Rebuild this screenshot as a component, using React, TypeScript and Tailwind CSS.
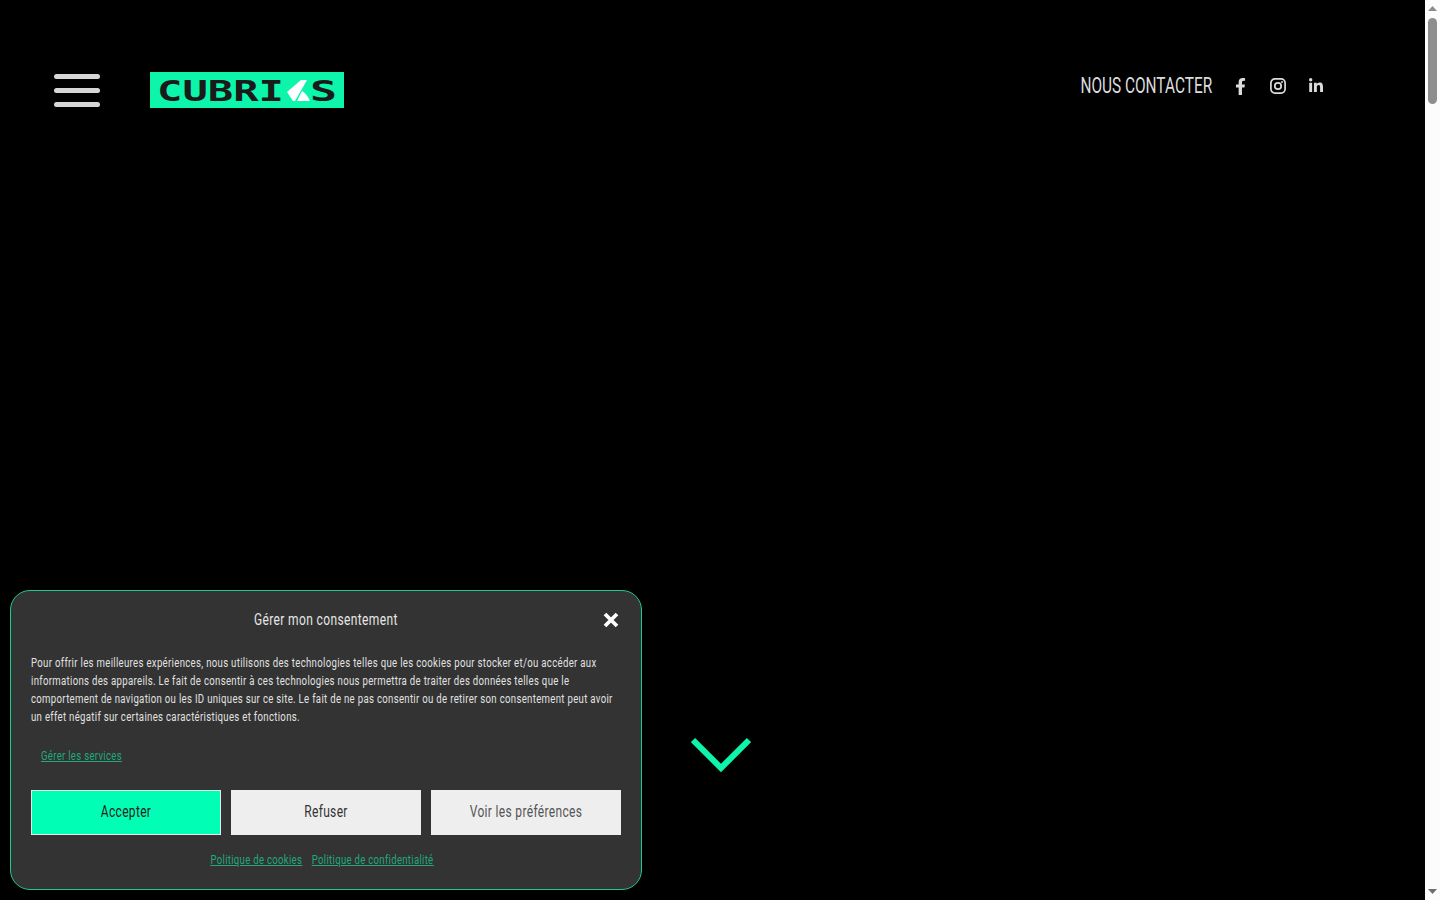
import { FaFacebookF, FaLinkedinIn } from 'react-icons/fa'

function Logo() {
  const letters = { fontFamily: "'DejaVu Sans Mono', monospace", fontWeight: 700, fontSize: 29 }
  return (
    <svg width="194" height="36" viewBox="0 0 194 36" aria-label="Cubriks">
      <rect width="194" height="36" fill="#0cf5ab" />
      <text x="7" y="29" textLength="127" lengthAdjust="spacingAndGlyphs" fill="#1a1a1a" style={letters}>
        CUBRI
      </text>
      <path d="M137 20 L151 8 L157 8 L145 29 L143 29 Z" fill="#fff" />
      <path d="M147 29 L152 19 Q157 22 160 29 Z" fill="#fff" />
      <text x="160" y="29" textLength="27" lengthAdjust="spacingAndGlyphs" fill="#1a1a1a" style={letters}>
        S
      </text>
    </svg>
  )
}

function InstagramIcon() {
  return (
    <svg width="16" height="16" viewBox="0 0 16 16" fill="none" stroke="currentColor" strokeWidth="1.7">
      <rect x="0.9" y="0.9" width="14.2" height="14.2" rx="4" />
      <circle cx="8" cy="8" r="3.2" />
      <circle cx="12" cy="4" r="1" fill="currentColor" stroke="none" />
    </svg>
  )
}

function Header() {
  return (
    <header className="flex items-start pt-[72px] pl-[54px] pr-[90px]">
      <button className="flex flex-col gap-[9px] pt-[2px] mr-[50px]" aria-label="Menu">
        <span className="block w-[46px] h-[5px] rounded-full bg-[#d6d6d6]" />
        <span className="block w-[46px] h-[5px] rounded-full bg-[#d6d6d6]" />
        <span className="block w-[46px] h-[5px] rounded-full bg-[#d6d6d6]" />
      </button>
      <Logo />
      <nav className="ml-auto flex items-center h-[28px] text-[#dcdcdc] font-['Roboto',sans-serif]">
        <a className="block text-[22px] leading-none whitespace-nowrap origin-right scale-x-[0.7] mr-[9px]">NOUS CONTACTER</a>
        <span className="flex justify-center w-[38px]">
          <FaFacebookF className="text-[17px]" />
        </span>
        <span className="flex justify-center w-[38px]">
          <InstagramIcon />
        </span>
        <span className="flex justify-center w-[38px]">
          <FaLinkedinIn className="text-[16px]" />
        </span>
      </nav>
    </header>
  )
}

function ConsentDialog() {
  return (
    <div className="fixed left-[10px] bottom-[10px] w-[632px] h-[300px] rounded-[20px] border border-[#1fc98f] bg-[#333333] px-[20px] text-white font-['Roboto',sans-serif]">
      <div className="relative flex justify-center pt-[18px]">
        <h2 className="text-[16px] leading-[22px] text-[#e6e6e6] whitespace-nowrap tracking-[0.5px] scale-x-[0.75]">Gérer mon consentement</h2>
        <svg className="absolute right-[2px] top-[21px]" width="16" height="16" viewBox="0 0 16 16">
          <path d="M2 2 L14 14 M14 2 L2 14" stroke="#fff" strokeWidth="3.8" />
        </svg>
      </div>
      <p className="mt-[23px] text-[12px] leading-[18px] text-[#e2e2e2] whitespace-nowrap tracking-[0.39px] origin-left scale-x-[0.8]">
        Pour offrir les meilleures expériences, nous utilisons des technologies telles que les cookies pour stocker et/ou accéder aux
        <br />
        informations des appareils. Le fait de consentir à ces technologies nous permettra de traiter des données telles que le
        <br />
        comportement de navigation ou les ID uniques sur ce site. Le fait de ne pas consentir ou de retirer son consentement peut avoir
        <br />
        un effet négatif sur certaines caractéristiques et fonctions.
      </p>
      <a className="block mt-[21px] ml-[10px] text-[12px] leading-[18px] text-[#1fa97c] underline whitespace-nowrap tracking-[0.36px] origin-left scale-x-[0.8]">Gérer les services</a>
      <div className="mt-[25px] grid grid-cols-3 gap-[10px]">
        <button className="h-[45px] pb-[1px] bg-[#00ffb4] border border-[#e8e8e8] text-[16px] text-[#222]">
          <span className="block tracking-[0.45px] scale-x-[0.75]">Accepter</span>
        </button>
        <button className="h-[45px] pb-[1px] bg-[#eeeeee] text-[16px] text-[#333]">
          <span className="block tracking-[0.45px] scale-x-[0.75]">Refuser</span>
        </button>
        <button className="h-[45px] pb-[1px] bg-[#eeeeee] text-[16px] text-[#555]">
          <span className="block tracking-[0.45px] scale-x-[0.75]">Voir les préférences</span>
        </button>
      </div>
      <div className="mt-[16px] pr-[10px] flex justify-center gap-[12px] text-[12px] leading-[18px] text-[#1fa97c] underline whitespace-nowrap tracking-[0.36px] scale-x-[0.8]">
        <a>Politique de cookies</a>
        <a>Politique de confidentialité</a>
      </div>
    </div>
  )
}

function Scrollbar() {
  return (
    <aside className="w-[15px] shrink-0 flex flex-col items-center bg-[#fcfcfc]">
      <svg className="mt-[6px]" width="9" height="5" viewBox="0 0 9 5">
        <path d="M4.5 0 L9 5 L0 5 Z" fill="#8c8c8c" />
      </svg>
      <div className="mt-[7px] w-[9px] h-[86px] rounded-full bg-[#8e8e8e]" />
      <svg className="mt-auto mb-[6px]" width="9" height="5" viewBox="0 0 9 5">
        <path d="M0 0 L9 0 L4.5 5 Z" fill="#6e6e6e" />
      </svg>
    </aside>
  )
}

export default function App() {
  return (
    <div className="flex h-screen overflow-hidden bg-black">
      <main className="flex-1 flex flex-col">
        <Header />
        <div className="flex-1 flex items-end justify-center pb-[127px] pl-[17px]">
          <svg width="60" height="36" viewBox="0 0 60 36">
            <path d="M2 3 L30 31 L58 3" fill="none" stroke="#0cf5ab" strokeWidth="6" />
          </svg>
        </div>
      </main>
      <Scrollbar />
      <ConsentDialog />
    </div>
  )
}
